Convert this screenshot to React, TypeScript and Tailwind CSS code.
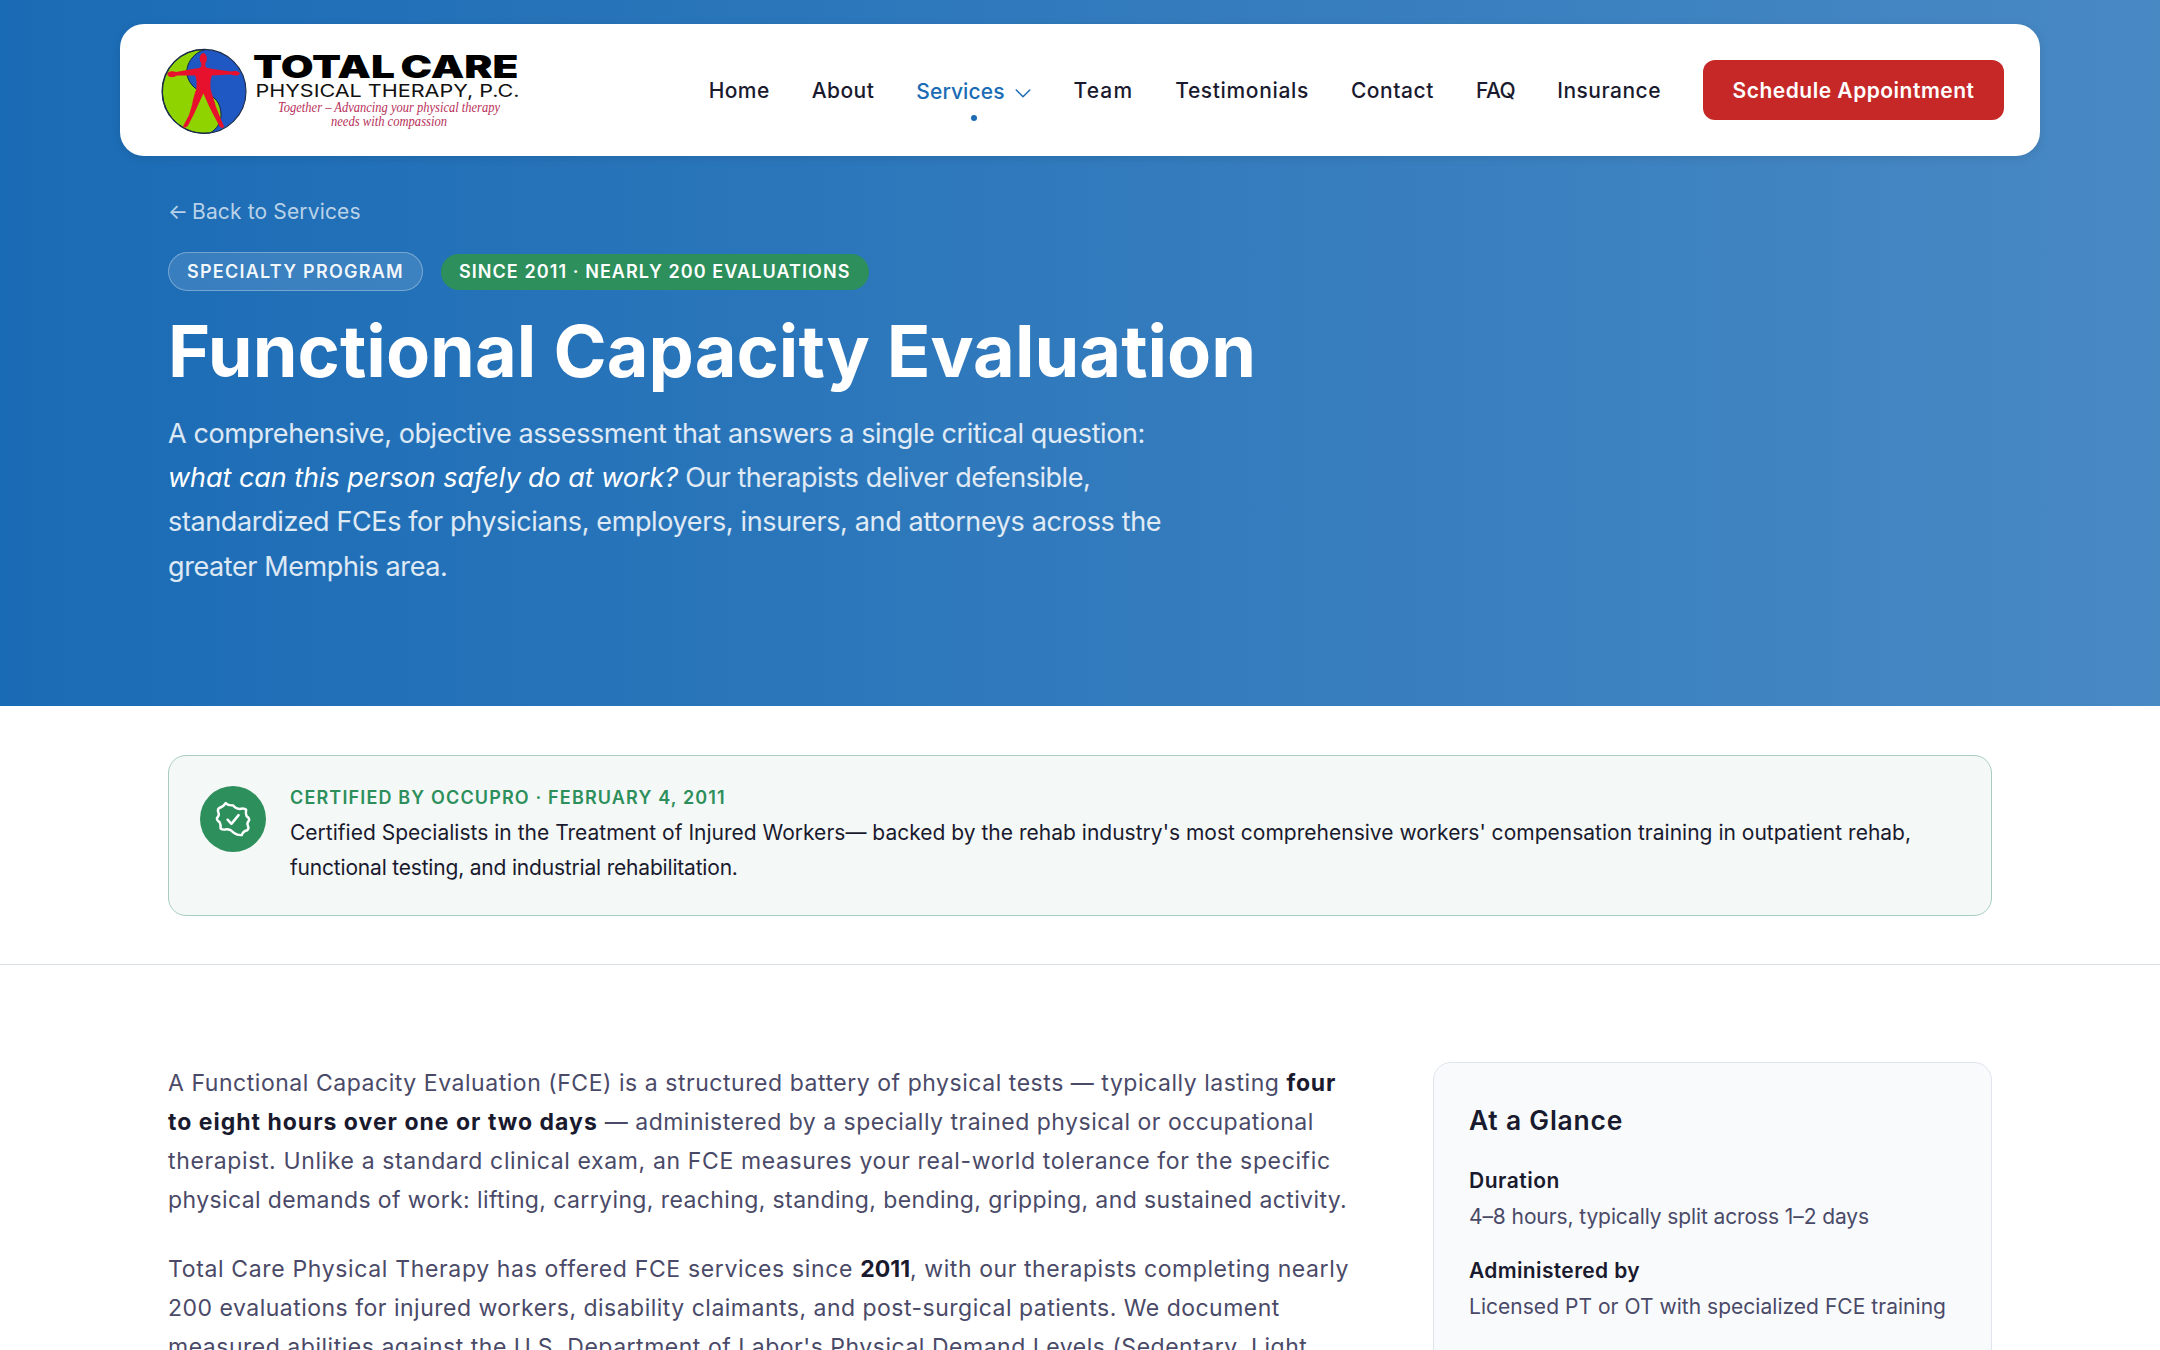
const navBefore = [
  { label: 'Home', spacing: 'tracking-[0.42px]' },
  { label: 'About', spacing: 'tracking-[0.45px]' },
]
const navAfter = [
  { label: 'Team', spacing: 'tracking-[1.1px]' },
  { label: 'Testimonials', spacing: 'tracking-[0.65px]' },
  { label: 'Contact', spacing: 'tracking-[0.55px]' },
  { label: 'FAQ', spacing: 'tracking-[-0.5px]' },
  { label: 'Insurance', spacing: 'tracking-[0.5px]' },
]

const facts = [
  { label: 'Duration', value: '4–8 hours, typically split across 1–2 days', labelClass: 'tracking-[0.5px]', valueClass: 'tracking-[-0.1px]' },
  { label: 'Administered by', value: 'Licensed PT or OT with specialized FCE training', labelClass: 'tracking-[0.35px]', valueClass: 'tracking-[0.03px]' },
]

function Logo() {
  return (
    <svg width="364" height="88" viewBox="0 0 364 88" role="img" aria-label="Total Care Physical Therapy, P.C.">
      {/* two-tone disc */}
      <circle cx="44" cy="43.4" r="42" fill="#1f57c3" />
      <path
        d="M46 1.4 A42 42 0 1 0 50 85 C57 81 61.5 74 61 66 C60.5 57 57 51 51 48 C44 44 37 43 32 37 C27 31 25.5 24 28 17 C31 9 38 3 46 1.4 Z"
        fill="#8fd400"
        stroke="#14264a"
        strokeWidth="1"
      />
      <circle cx="44" cy="43.4" r="42" fill="none" stroke="#1c2b4a" strokeWidth="1.1" />
      {/* figure */}
      <g fill="#e8112d">
        <ellipse cx="43.3" cy="10.5" rx="3.6" ry="5.4" />
        <path d="M41.3 14 h4 v4 C46 20 49 20.3 53 21 L71 23.6 C74 22.6 78 22.8 80 25.2 C79 27.6 75 28.2 71 26.6 L52 27.6 C50.5 31 50 36 50.6 41 C52 47 54.5 53 56 59 L60.5 70 L63.8 78 C64.5 80.5 61 80.5 59.6 78.6 L53 66 L48.5 57 L43.4 45.5 L38.5 56 L34 66 L28 77.5 C26 80.5 22 80.2 23.5 77.5 L29 67 L32 57 C33 51 34.5 46 36.3 41 C37 36 36.7 31 35 27.6 L17 27.6 C13 30.2 8.5 29.4 7.4 26.8 C7 23.4 12 22.6 16 24 L34 20.8 C38 20.2 41 20 41.3 18 Z" />
      </g>
      <g className="fill-black font-['Inter'] text-[31px] font-black">
        <text x="93" y="29.7" textLength="142" lengthAdjust="spacingAndGlyphs">TOTAL</text>
        <text x="240.5" y="29.7" textLength="118" lengthAdjust="spacingAndGlyphs">CARE</text>
      </g>
      <text x="95.5" y="49" textLength="264" lengthAdjust="spacingAndGlyphs" className="fill-[#111] font-['Inter'] text-[17.4px] font-normal">
        PHYSICAL THERAPY, P.C.
      </text>
      <g className="fill-[#b8305a] font-['Liberation_Serif'] text-[14px] italic">
        <text x="118" y="64" textLength="222" lengthAdjust="spacingAndGlyphs">
          Together – Advancing your physical therapy
        </text>
        <text x="171" y="78.4" textLength="116" lengthAdjust="spacingAndGlyphs">
          needs with compassion
        </text>
      </g>
    </svg>
  )
}

function Navbar() {
  return (
    <header className="mx-auto flex h-[132px] w-[1920px] items-center justify-between rounded-3xl bg-white pr-9 pl-10 shadow-[0_2px_8px_rgba(0,0,0,0.1)]">
      <a href="#" className="mt-1">
        <Logo />
      </a>
      <nav className="flex items-center gap-[42px] text-[21px] font-medium text-[#1a1a2e]">
        {navBefore.map((item) => (
          <a key={item.label} href="#" className={`pt-0.5 ${item.spacing}`}>{item.label}</a>
        ))}
        <a href="#" className="relative flex items-center gap-[9px] pt-1 tracking-[0.1px] text-[#1b6cb5]">
          Services
          <svg width="18" height="18" viewBox="0 0 12 12" fill="none" stroke="currentColor" strokeWidth="1" strokeLinecap="round" strokeLinejoin="round" className="mt-0.5">
            <path d="M1.5 4 6 8.5 10.5 4" />
          </svg>
          <span className="absolute -bottom-[13px] left-1/2 size-1.5 -translate-x-1/2 rounded-full bg-[#1b6cb5]" />
        </a>
        {navAfter.map((item) => (
          <a key={item.label} href="#" className={`pt-0.5 ${item.spacing}`}>{item.label}</a>
        ))}
        <a href="#" className="flex h-[60px] w-[301px] items-center justify-center rounded-xl bg-[#c62828] pt-0.5 font-semibold tracking-[0.5px] text-white">
          Schedule Appointment
        </a>
      </nav>
    </header>
  )
}

function Hero() {
  return (
    <section className="h-[706px] bg-linear-to-r/srgb from-[#1a6bb5] to-[#4889c4] pt-6">
      <Navbar />
      <div className="mx-auto flex w-[1824px] flex-col items-start text-white">
        <a href="#" className="mt-[39px] flex text-[21px] leading-[34px] text-white/70">
          <span className="mr-[6px] w-[18px]">←</span>
          <span className="tracking-[0.15px]">Back to Services</span>
        </a>
        <div className="mt-[23px] flex items-center gap-[18px] text-lg leading-none font-semibold">
          <span className="flex h-[39px] items-center rounded-full border border-white/30 bg-white/12 px-[18px] tracking-[1.25px] text-white/95">SPECIALTY PROGRAM</span>
          <span className="flex h-9 items-center rounded-full bg-[#2d8f5c] px-[18px] tracking-[0.06em]">SINCE 2011 · NEARLY 200 EVALUATIONS</span>
        </div>
        <h1 className="mt-[18px] text-7xl leading-[83px] font-bold tracking-[0.03px]">Functional Capacity Evaluation</h1>
        <p className="mt-[20px] w-[1020px] text-[27px] leading-[44.2px] tracking-[-0.41px] text-white/85">
          A comprehensive, objective assessment that answers a single critical question:<br />
          <em className="tracking-[-0.04px] text-white">what can this person safely do at work?</em><span className="tracking-[-0.5px]"> Our therapists deliver defensible,</span><br />
          <span className="tracking-[-0.37px]">standardized FCEs for physicians, employers, insurers, and attorneys across the</span><br />
          greater Memphis area.
        </p>
      </div>
    </section>
  )
}

function Certification() {
  return (
    <section className="border-b border-[#d9dfe3] pt-[49px] pb-12">
      <div className="mx-auto flex h-[161px] w-[1824px] items-start gap-6 rounded-[18px] border border-[#a9cdbc] bg-[#f4f8f7] p-[30px] pl-[31px]">
        <span className="flex size-[66px] shrink-0 items-center justify-center rounded-full bg-[#2d8f5c]">
          <svg width="42" height="42" viewBox="0 0 24 24" fill="none" stroke="white" strokeWidth="1.4" strokeLinecap="round" strokeLinejoin="round">
            <path d="M8.9 12.4 11.1 14.8 15.2 9.8" />
            <path d="M7.8 2.9 Q9.2 4.4 11.9 4.2 Q13.6 6.3 15.7 6.3 Q18.4 5.6 19.5 6.7 Q19 8.8 19.8 10.4 Q21.6 11.6 21.2 12.8 Q19.8 14.4 20.4 15.6 Q21.3 17.4 20.2 18.4 Q17.6 19 17 21.2 Q14.6 21.4 12.6 20 Q10.6 17.8 8.6 17.8 Q6.2 18.5 4.9 17.4 Q5.2 15.3 4.3 13.8 Q2.4 12.6 2.9 11.3 Q4.4 9.8 3.7 8.4 Q2.9 6.6 4.1 5.7 Q6.3 5.2 7.8 2.9 Z" />
          </svg>
        </span>
        <div className="text-[21px] leading-[35px] text-[#1a1a2e]">
          <div className="text-lg leading-6 font-semibold tracking-[0.064em] text-[#2d8f5c]">CERTIFIED BY OCCUPRO · FEBRUARY 4, 2011</div>
          <p className="mt-[5px]">
            <span className="tracking-[0.01px]">Certified Specialists in the Treatment of Injured Workers— backed by the rehab industry's most comprehensive workers' compensation training in outpatient rehab,</span><br />
            <span className="tracking-[-0.19px]">functional testing, and industrial rehabilitation.</span>
          </p>
        </div>
      </div>
    </section>
  )
}

export default function App() {
  return (
    <div className="h-[1350px] overflow-hidden bg-white font-['Inter',sans-serif]">
      <Hero />
      <Certification />
      <main className="mx-auto flex w-[1824px] items-start justify-between pt-[97px]">
        <article className="w-[1200px] space-y-[30px] pt-[2px] text-[23px] leading-[39px] text-[#4a4a68]">
          <p>
            <span className="tracking-[0.54px]">A Functional Capacity Evaluation (FCE) is a structured battery of physical tests — typically lasting </span>
            <strong className="font-bold tracking-[0.8px] text-[#1a1a2e]">four</strong><br />
            <strong className="font-bold tracking-[1px] text-[#1a1a2e]">to eight hours over one or two days</strong>
            <span className="tracking-[0.5px]"> — administered by a specially trained physical or occupational</span><br />
            <span className="tracking-[0.63px]">therapist. Unlike a standard clinical exam, an FCE measures your real-world tolerance for the specific</span><br />
            <span className="tracking-[0.39px]">physical demands of work: lifting, carrying, reaching, standing, bending, gripping, and sustained activity.</span>
          </p>
          <p>
            <span className="tracking-[0.65px]">Total Care Physical Therapy has offered FCE services since </span>
            <strong className="font-bold tracking-normal text-[#1a1a2e]">2011</strong>
            <span className="tracking-[0.57px]">, with our therapists completing nearly</span><br />
            <span className="tracking-[0.49px]">200 evaluations for injured workers, disability claimants, and post-surgical patients. We document</span><br />
            <span className="tracking-[0.52px]">measured abilities against the U.S. Department of Labor's Physical Demand Levels (Sedentary, Light,</span>
          </p>
        </article>
        <aside className="h-[480px] w-[559px] rounded-[18px] border border-[#e0e5ed] bg-[#f9fafc] py-9 pl-[35px]">
          <h2 className="mb-[21px] text-[26.4px] leading-[43px] font-semibold tracking-[0.8px] text-[#1a1a2e]">At a Glance</h2>
          <dl className="space-y-[18px] text-[21px] leading-9">
            {facts.map((fact) => (
              <div key={fact.label}>
                <dt className={`font-semibold text-[#1a1a2e] ${fact.labelClass}`}>{fact.label}</dt>
                <dd className={`text-[#4a4a68] ${fact.valueClass}`}>{fact.value}</dd>
              </div>
            ))}
          </dl>
        </aside>
      </main>
    </div>
  )
}
